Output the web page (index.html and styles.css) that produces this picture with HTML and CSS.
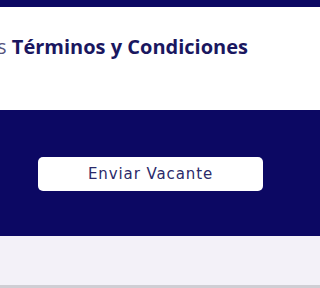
FILE: index.html
```html
<!DOCTYPE html>
<html lang="es">
<head>
<meta charset="utf-8">
<link rel="stylesheet" href="styles.css">
</head>
<body>
  <div class="topbar"></div>
  <section class="terms-area">
    <p class="terms"><span class="muted">He leído y acepto los&nbsp;</span><strong>Términos y Condiciones</strong></p>
  </section>
  <section class="submit-area">
    <button class="submit" type="button">Enviar Vacante</button>
  </section>
  <section class="footer-area"></section>
  <div class="bottom-line"></div>
</body>
</html>
```
FILE: styles.css
```css
html, body {
  margin: 0;
  padding: 0;
  background: #ffffff;
  font-family: "Open Sans", "Noto Sans", sans-serif;
}
body {
  overflow: hidden;
}
.topbar {
  height: 7px;
  background: #0c0863;
}
.terms-area {
  height: 103px;
  overflow: hidden;
}
.terms {
  margin: 0;
  width: 248px;
  padding: 26px 0 0 0;
  display: flex;
  justify-content: flex-end;
  white-space: nowrap;
  font-size: 20px;
  line-height: 28px;
}
.muted {
  color: #55547e;
  font-weight: 400;
}
.terms strong {
  color: #1a175f;
  font-weight: 700;
}
.submit-area {
  height: 126px;
  background: #0c0863;
  padding: 47px 0 0 38px;
  box-sizing: border-box;
}
.submit {
  display: block;
  width: 225px;
  height: 34px;
  border: 0;
  border-radius: 5px;
  background: #ffffff;
  color: #2b2a6a;
  font-family: "DejaVu Sans", sans-serif;
  font-size: 15px;
  font-weight: 400;
  letter-spacing: 0.9px;
  padding: 0;
  cursor: pointer;
}
.footer-area {
  height: 49px;
  background: #f3f1f8;
}
.bottom-line {
  height: 3px;
  background: #cfced4;
}
```
